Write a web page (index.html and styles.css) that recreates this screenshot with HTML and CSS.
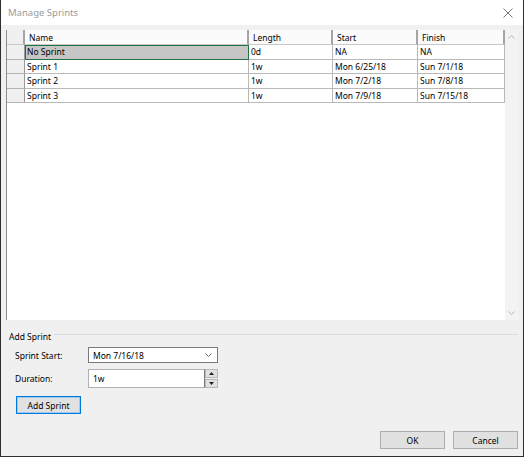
FILE: index.html
```html
<!DOCTYPE html>
<html lang="en">
<head>
<meta charset="utf-8">
<title>Manage Sprints</title>
<link rel="stylesheet" href="styles.css">
</head>
<body>
<div class="window">
  <div class="titlebar">
    <span class="title">Manage Sprints</span>
    <svg class="close" width="10" height="10" viewBox="0 0 10 10"><path d="M0.5 0.5L9.5 9.5M9.5 0.5L0.5 9.5" stroke="#7a7a7a" stroke-width="1" fill="none"/></svg>
  </div>
  <div class="content">
    <div class="grid-panel">
      <div class="sheet">
        <div class="row head">
          <div class="sel"></div>
          <div class="cell">Name</div>
          <div class="cell">Length</div>
          <div class="cell">Start</div>
          <div class="cell">Finish</div>
        </div>
        <div class="row">
          <div class="sel"></div>
          <div class="cell active">No Sprint</div>
          <div class="cell">0d</div>
          <div class="cell">NA</div>
          <div class="cell">NA</div>
        </div>
        <div class="row">
          <div class="sel"></div>
          <div class="cell">Sprint 1</div>
          <div class="cell">1w</div>
          <div class="cell">Mon 6/25/18</div>
          <div class="cell">Sun 7/1/18</div>
        </div>
        <div class="row">
          <div class="sel"></div>
          <div class="cell">Sprint 2</div>
          <div class="cell">1w</div>
          <div class="cell">Mon 7/2/18</div>
          <div class="cell">Sun 7/8/18</div>
        </div>
        <div class="row">
          <div class="sel"></div>
          <div class="cell">Sprint 3</div>
          <div class="cell">1w</div>
          <div class="cell">Mon 7/9/18</div>
          <div class="cell">Sun 7/15/18</div>
        </div>
      </div>
      <div class="vscroll">
        <svg width="7" height="4" viewBox="0 0 7 4"><path d="M0.5 3.5L3.5 0.5L6.5 3.5" stroke="#b4b4b4" fill="none"/></svg>
        <svg width="7" height="4" viewBox="0 0 7 4"><path d="M0.5 0.5L3.5 3.5L6.5 0.5" stroke="#b4b4b4" fill="none"/></svg>
      </div>
    </div>

    <div class="group-head">
      <span>Add Sprint</span>
      <div class="rule"></div>
    </div>

    <div class="field">
      <label class="field-label">Sprint Start:</label>
      <div class="combo">
        <span>Mon 7/16/18</span>
        <svg width="7" height="4" viewBox="0 0 7 4"><path d="M0.5 0.5L3.5 3.5L6.5 0.5" stroke="#6d6d6d" fill="none"/></svg>
      </div>
    </div>

    <div class="field second">
      <label class="field-label">Duration:</label>
      <div class="spin">
        <div class="spin-text">1w</div>
        <div class="spin-btns">
          <div class="spin-btn"><svg width="5" height="3" viewBox="0 0 5 3"><path d="M0 3L2.5 0L5 3Z" fill="#222"/></svg></div>
          <div class="spin-btn"><svg width="5" height="3" viewBox="0 0 5 3"><path d="M0 0L2.5 3L5 0Z" fill="#222"/></svg></div>
        </div>
      </div>
    </div>

    <button class="btn add">Add Sprint</button>

    <div class="footer">
      <button class="btn">OK</button>
      <button class="btn">Cancel</button>
    </div>
  </div>
</div>
</body>
</html>
```
FILE: styles.css
```css
* { box-sizing: border-box; }

html, body {
  margin: 0;
  padding: 0;
  background: #f0f0f0;
}

body {
  font-family: "Noto Sans", "Open Sans", sans-serif;
  font-size: 8.5px;
  color: #000;
}

.window {
  width: 524px;
  height: 457px;
  border: 1px solid #2e2e2e;
  border-top: none;
  display: flex;
  flex-direction: column;
  background: #f0f0f0;
}

.titlebar {
  height: 25px;
  background: #fff;
  display: flex;
  align-items: center;
  justify-content: space-between;
  padding: 0 10px 1px 7px;
}

.title {
  font-size: 9.5px;
  color: #9a9a9a;
}

.close { margin-top: 1px; }

.content {
  flex: 1;
  display: flex;
  flex-direction: column;
  padding: 5px 5px 0 5px;
}

/* data sheet */
.grid-panel {
  height: 290px;
  background: #fff;
  border-left: 1px solid #8c8c8c;
  display: flex;
}

.sheet {
  width: 498px;
  font-size: 8.5px;
}

.row {
  display: grid;
  grid-template-columns: 18px 224px 84px 85px 87px;
  height: 14.5px;
}

.row.head { height: 15px; }

.sel {
  background: #f0f0f0;
  border-right: 1px solid #9a9a9a;
  border-bottom: 1px solid #b4b4b4;
}

.cell {
  border-right: 1px solid #b9b9b9;
  border-bottom: 1px solid #b9b9b9;
  padding-left: 2px;
  line-height: 13px;
  white-space: nowrap;
  overflow: hidden;
}

.head .cell {
  background: #fbfbfb;
  border-right: 2px solid #a5a5a5;
  border-bottom: 1px solid #c8c8c8;
  padding-left: 4px;
  line-height: 16px;
}

.head .sel {
  border-bottom: 1px solid #c8c8c8;
  border-right: 2px solid #a5a5a5;
}

.cell.active {
  background: #c6c6c6;
  border: 1px solid #217346;
  padding-left: 1px;
  line-height: 12px;
}

.vscroll {
  width: 13px;
  background: #f3f3f3;
  display: flex;
  flex-direction: column;
  align-items: center;
  justify-content: space-between;
  padding: 5px 0 5px;
}

/* add sprint group */
.group-head {
  margin-top: 10px;
  height: 12px;
  display: flex;
  align-items: center;
  padding-left: 3px;
}

.group-head span { white-space: nowrap; }

.rule {
  flex: 1;
  height: 1px;
  background: #dadada;
  margin: -3px 0 0 3px;
}

.field {
  margin-top: 5px;
  display: flex;
  align-items: center;
  padding-left: 9px;
}

.field.second { margin-top: 6px; }

.field-label {
  width: 73px;
}

.combo {
  width: 130px;
  height: 16px;
  background: #fff;
  border: 1px solid #7a7a7a;
  display: flex;
  align-items: center;
  justify-content: space-between;
  padding: 0 5px 0 4px;
}

.spin {
  display: flex;
  height: 19px;
}

.spin-text {
  width: 117px;
  background: #fff;
  border: 1px solid #b0b0b0;
  border-right: 1px solid #7a7a7a;
  padding-left: 4px;
  line-height: 17px;
}

.spin-btns {
  width: 13px;
  display: flex;
  flex-direction: column;
  gap: 1px;
}

.spin-btn {
  flex: 1;
  background: #e1e1e1;
  border: 1px solid #b8b8b8;
  display: flex;
  align-items: center;
  justify-content: center;
}

.btn {
  font-family: inherit;
  font-size: 8.5px;
  color: #000;
  background: #e1e1e1;
  border: 1px solid #adadad;
  width: 65px;
  height: 18px;
  padding: 0;
}

.btn.add {
  margin: 8px 0 0 10px;
  border: 1px solid #0078d7;
  box-shadow: inset 0 0 0 1px #9ccaf0;
}

.footer {
  margin-top: 17px;
  display: flex;
  justify-content: flex-end;
  gap: 8px;
}
```
